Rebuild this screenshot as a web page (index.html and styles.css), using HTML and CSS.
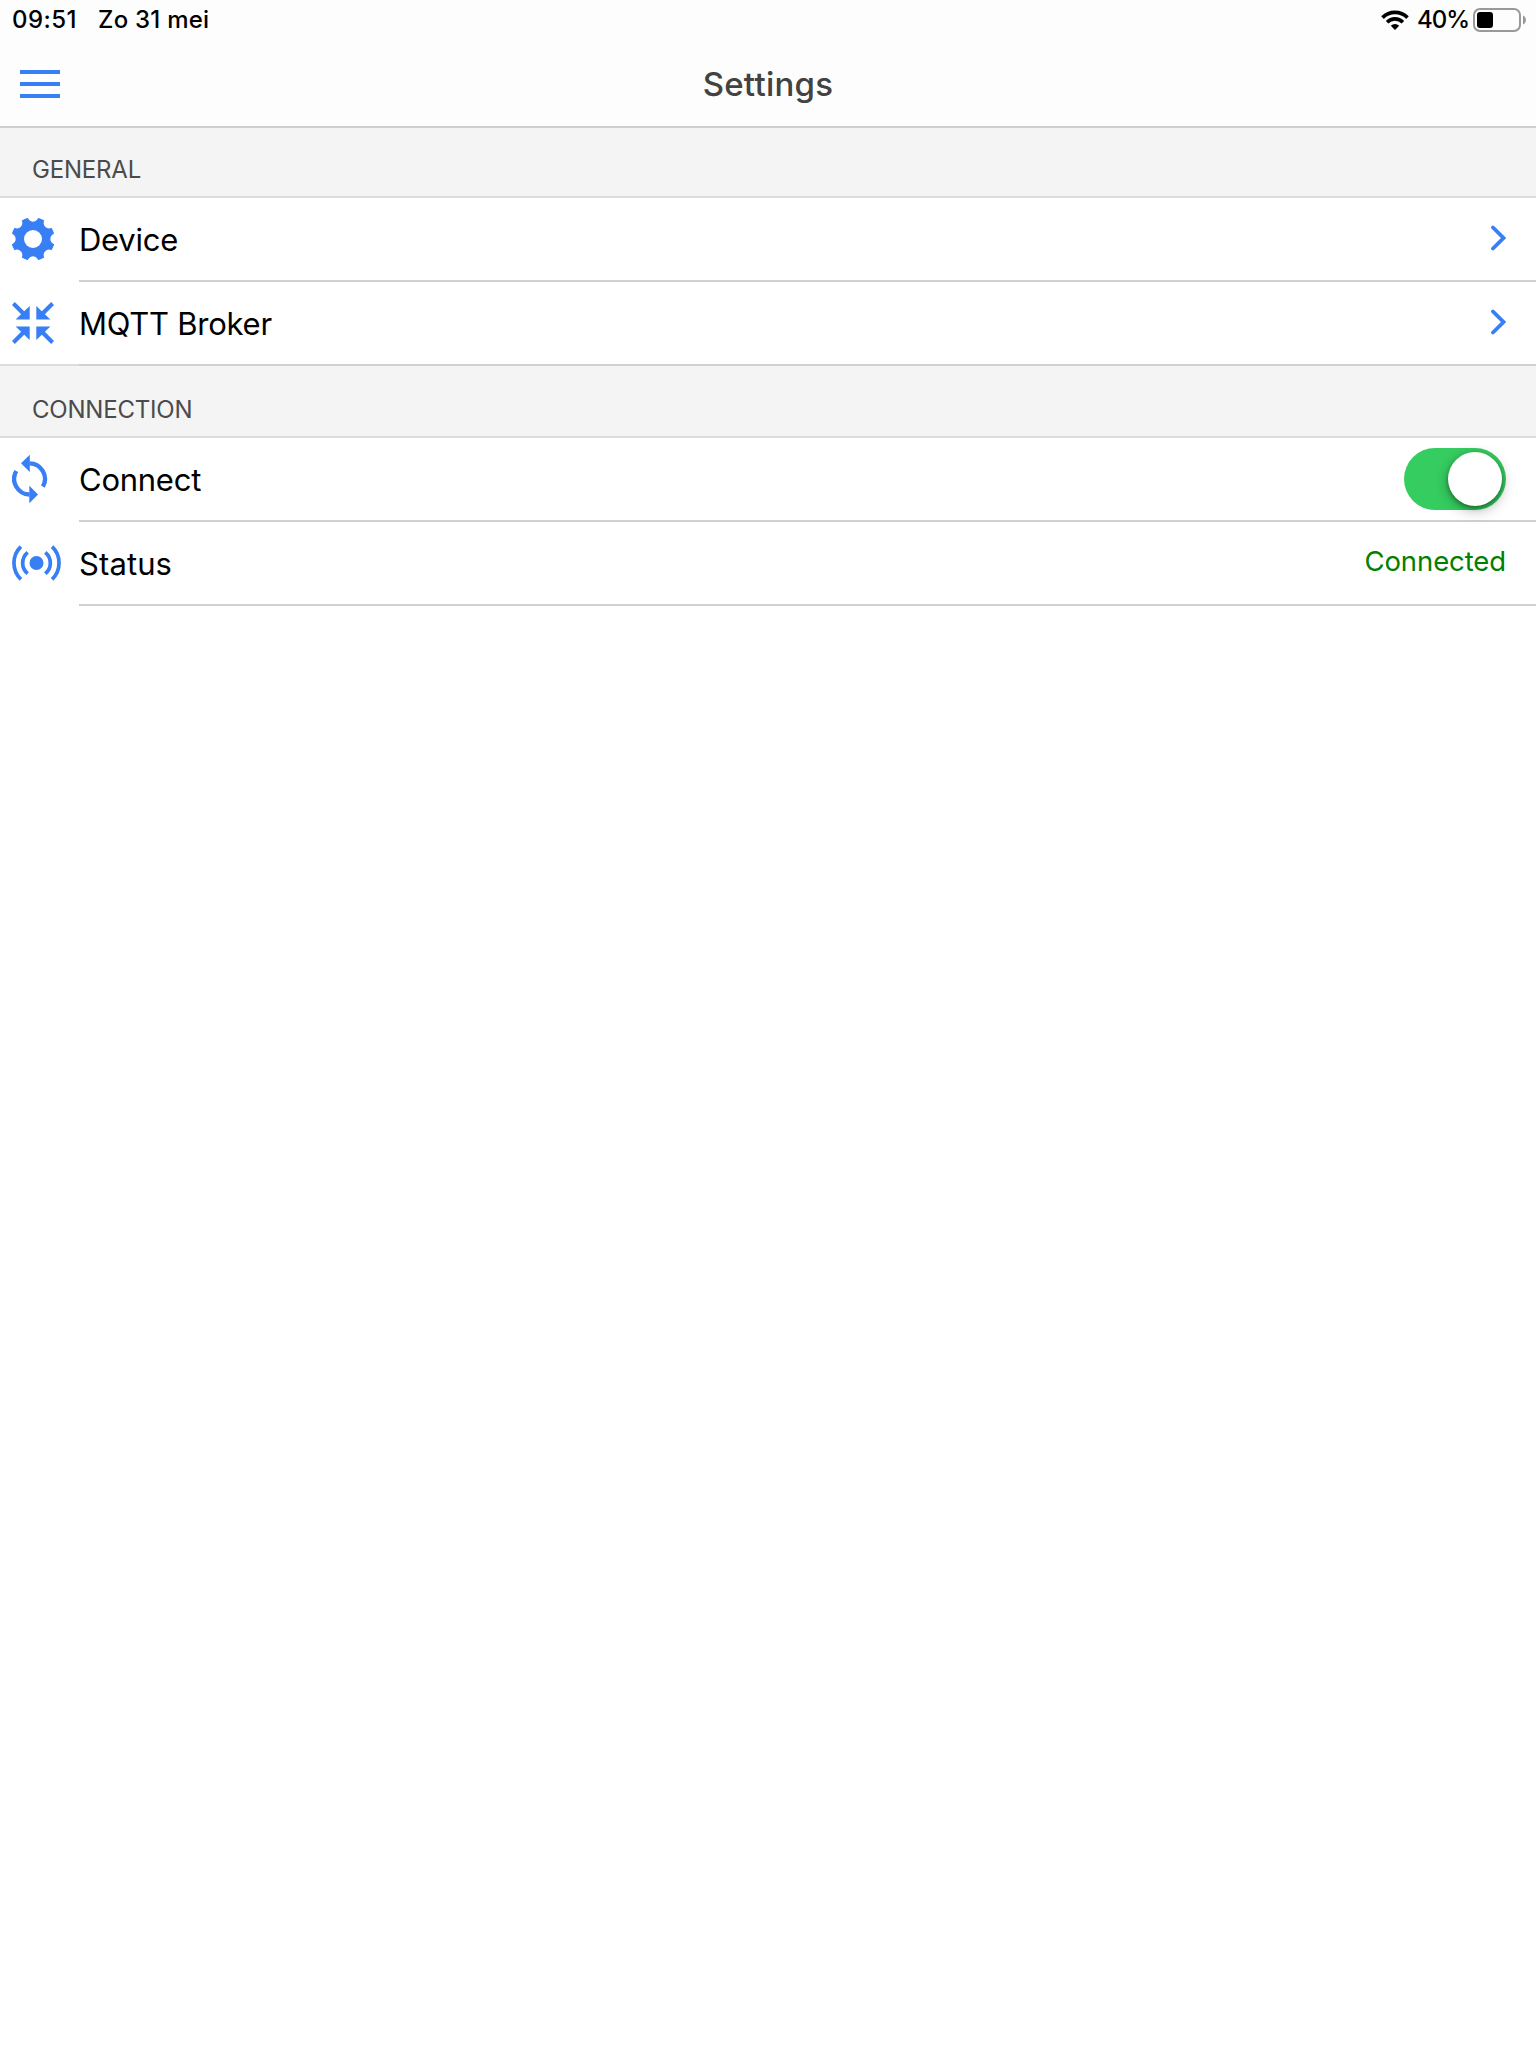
FILE: index.html
```html
<!DOCTYPE html>
<html lang="nl">
<head>
<meta charset="utf-8">
<title>Settings</title>
<link rel="stylesheet" href="styles.css">
</head>
<body>
<header class="header">
  <div class="status-bar">
    <span class="time">09:51</span>
    <span class="date">Zo 31 mei</span>
    <svg class="wifi" width="28" height="20" viewBox="0 0 28 20">
      <g fill="none" stroke="#000" stroke-width="3.7">
        <path d="M1.5 7.6a17.7 17.7 0 0 1 25 0"/>
        <path d="M6.1 12.2a11.2 11.2 0 0 1 15.8 0"/>
      </g>
      <path d="M9.8 15.7a6 6 0 0 1 8.4 0L14 20z"/>
    </svg>
    <span class="percent">40%</span>
    <svg class="battery" width="54" height="24" viewBox="0 0 54 24">
      <rect x="1" y="1" width="46" height="22" rx="6" fill="none" stroke="#999" stroke-width="2"/>
      <rect x="4" y="4" width="16" height="16" rx="3"/>
      <path d="M50 7.5q3 1.5 3 4.5t-3 4.5z" fill="#999"/>
    </svg>
  </div>
  <div class="nav-bar">
    <button class="menu" aria-label="Menu"><i></i><i></i><i></i></button>
    <h1 class="title">Settings</h1>
  </div>
</header>
<main>
  <h2 class="divider"><span>GENERAL</span></h2>
  <div class="item">
    <div class="icon">
      <svg width="42" height="42" viewBox="-21 -21 42 42">
        <mask id="gear">
          <rect x="-22" y="-22" width="44" height="44" fill="#fff"/>
          <circle r="9"/>
          <circle cy="-22.7" r="5.4"/><circle cy="22.7" r="5.4"/>
          <circle cx="-22.7" r="5.4"/><circle cx="22.7" r="5.4"/>
          <circle cx="16" cy="16" r="5.4"/><circle cx="-16" cy="16" r="5.4"/>
          <circle cx="16" cy="-16" r="5.4"/><circle cx="-16" cy="-16" r="5.4"/>
        </mask>
        <circle r="21.7" fill="#387ef5" mask="url(#gear)"/>
      </svg>
    </div>
    <div class="content"><span class="label">Device</span>
      <svg class="chevron" width="15" height="26" viewBox="0 0 15 26"><path d="M2 2.5L12.5 13 2 23.5"/></svg>
    </div>
  </div>
  <div class="item">
    <div class="icon">
      <svg width="42" height="42" viewBox="0 0 42 42" fill="#387ef5">
        <path id="arrow" d="M2.8 0L12.200 9.300 17.700 4v13.500H3.600L9.100 12.200 0 3z"/>
        <use href="#arrow" transform="matrix(-1 0 0 1 42 0)"/>
        <use href="#arrow" transform="matrix(1 0 0 -1 0 42)"/>
        <use href="#arrow" transform="matrix(-1 0 0 -1 42 42)"/>
      </svg>
    </div>
    <div class="content"><span class="label">MQTT Broker</span>
      <svg class="chevron" width="15" height="26" viewBox="0 0 15 26"><path d="M2 2.5L12.5 13 2 23.5"/></svg>
    </div>
  </div>
  <h2 class="divider second"><span>CONNECTION</span></h2>
  <div class="item">
    <div class="icon">
      <svg width="36" height="50" viewBox="0 0 36 50">
        <g fill="none" stroke="#387ef5" stroke-width="4.3">
          <path d="M17.5 9.3A15.6 15.6 0 0 1 30.9 32.6"/>
          <path d="M17.5 40.5A15.6 15.6 0 0 1 4.3 17"/>
        </g>
        <path d="M9 9.3L17.8.7v17.3zM26 40.4L17.3 49.3V31.7z" fill="#387ef5"/>
      </svg>
    </div>
    <div class="content"><span class="label">Connect</span>
      <div class="toggle" role="switch" aria-checked="true"><i></i></div>
    </div>
  </div>
  <div class="item">
    <div class="icon">
      <svg width="50" height="36" viewBox="-24.5 -18 50 36">
        <circle r="7" fill="#387ef5"/>
        <g fill="none" stroke="#387ef5" stroke-width="3.7">
          <path d="M-15.6-16.3A22.6 22.6 0 0 0-15.6 16.3M15.6-16.3A22.6 22.6 0 0 1 15.6 16.3"/>
          <path d="M-8.8-10.7A13.9 13.9 0 0 0-8.8 10.7M8.8-10.7A13.9 13.9 0 0 1 8.8 10.7"/>
        </g>
      </svg>
    </div>
    <div class="content"><span class="label wide">Status</span>
      <span class="note">Connected</span>
    </div>
  </div>
</main>
</body>
</html>
```
FILE: styles.css
```css
* { box-sizing: border-box; }
body { margin: 0; min-height: 2048px; background: #fff; font-family: Inter, "Liberation Sans", sans-serif; color: #000; }
h1, h2 { margin: 0; font-weight: 400; }
svg { display: block; flex: none; }
span { white-space: nowrap; }

.header { height: 128px; background: #fdfdfd; border-bottom: 2px solid #cfcfcf; }
.status-bar { display: flex; align-items: center; height: 40px; padding: 0 9px 0 12px; font-size: 24px; font-weight: 500; line-height: 40px; }
.time { width: 86px; letter-spacing: .45px; }
.date { letter-spacing: .25px; }
.wifi { margin-left: auto; }
.percent { margin: 0 4px 0 8px; letter-spacing: -1px; }

.nav-bar { display: grid; grid-template-columns: 1fr auto 1fr; align-items: center; height: 88px; padding: 0 20px; }
.menu { display: flex; flex-direction: column; gap: 8px; width: 40px; padding: 0; border: 0; background: none; }
.menu i { height: 4px; background: #387ef5; }
.title { font-size: 33px; font-weight: 500; line-height: 40px; letter-spacing: .25px; color: #424242; }

.divider { height: 70px; padding: 22px 32px 0; background: #f4f4f4; border-bottom: 2px solid #dcdcdc; color: #4b4b4b; font-size: 24px; line-height: 40px; letter-spacing: -.2px; }
.second { height: 72px; padding-top: 24px; }

.item { display: flex; height: 84px; background: #fff; }
.icon { display: flex; align-items: center; width: 79px; padding: 0 0 2px 12px; }
.content { display: flex; flex: 1; align-items: center; justify-content: space-between; padding: 0 30px 0 0; border-bottom: 2px solid #d0d0d0; }
.item:has(+ .divider) .icon { border-bottom: 2px solid #dcdcdc; padding-bottom: 0; }
.label { font-size: 31px; line-height: 40px; padding-top: 1px; letter-spacing: -.25px; }
.wide { letter-spacing: .1px; }
.chevron { margin-bottom: 2px; fill: none; stroke: #387ef5; stroke-width: 3.8; stroke-linecap: round; }
.note { color: #008000; font-size: 27.5px; line-height: 40px; padding-bottom: 5px; letter-spacing: -.1px; }

.toggle { display: flex; justify-content: flex-end; width: 102px; height: 62px; padding: 4px; border-radius: 31px; background: #35cd60; }
.toggle i { width: 54px; height: 54px; border-radius: 50%; background: #fff; box-shadow: 0 4px 14px rgba(0,0,0,.3), 0 2px 4px rgba(0,0,0,.35); }
```
